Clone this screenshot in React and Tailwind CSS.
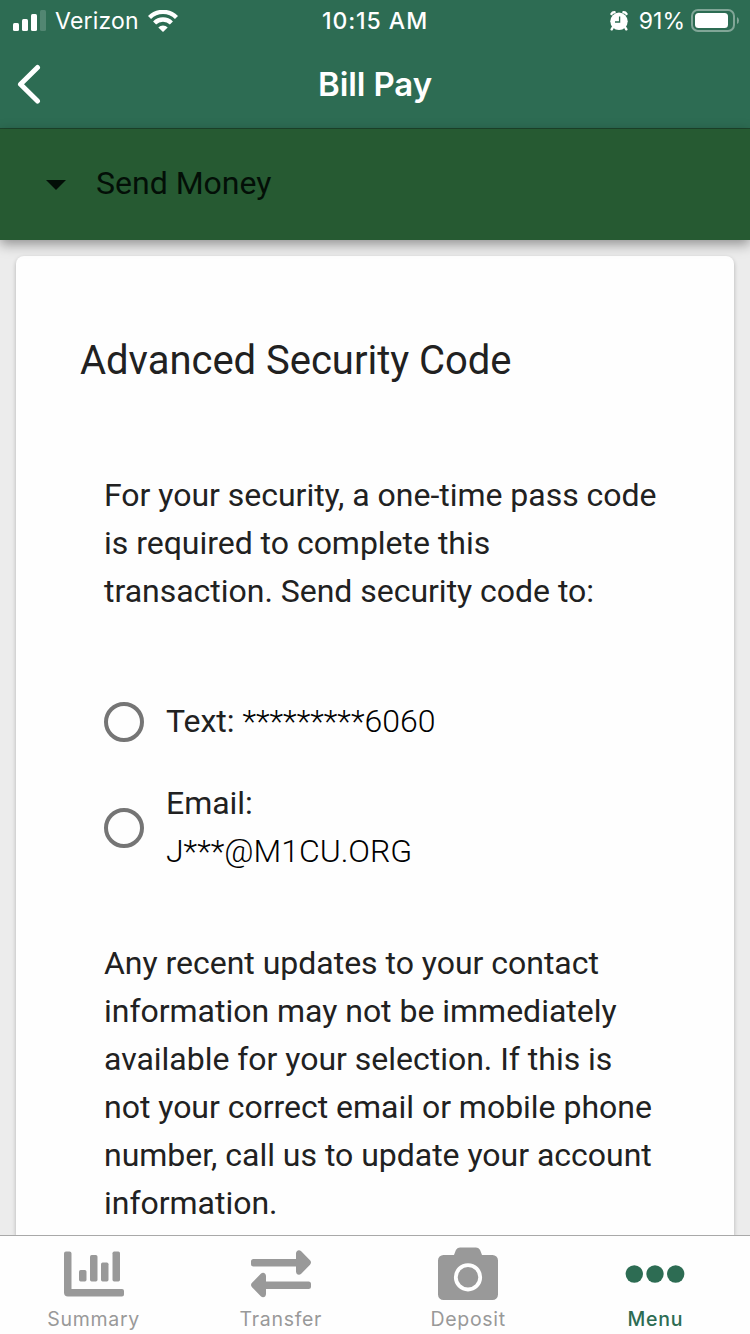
import React from "react";

const tabs = [
  { name: "Summary", icon: SummaryIcon, active: false },
  { name: "Transfer", icon: TransferIcon, active: false },
  { name: "Deposit", icon: DepositIcon, active: false },
  { name: "Menu", icon: MenuIcon, active: true },
];

function SummaryIcon() {
  return (
    <svg width="60" height="60" viewBox="0 0 60 60" fill="currentColor">
      <path d="M2 10.500h3.500a2 2 0 0 1 2 2V48h50.500a2 2 0 0 1 2 2v3.500a2 2 0 0 1-2 2H4a4 4 0 0 1-4-4V12.500a2 2 0 0 1 2-2z" />
      <rect x="15" y="29" width="7.500" height="11.500" rx="1.700" />
      <rect x="26" y="14" width="7.500" height="26.500" rx="1.700" />
      <rect x="37" y="21.500" width="7.500" height="19" rx="1.700" />
      <rect x="48.500" y="10.500" width="7.500" height="30" rx="1.700" />
    </svg>
  );
}

function TransferIcon() {
  return (
    <svg width="60" height="60" viewBox="0 0 60 60" fill="currentColor">
      <path d="M2.500 18H45V12.500C45 9.500 48 8 50.200 10.200L59 19.300Q61 21.500 59 23.700L50.200 32.800C48 35 45 33.500 45 30.500V25.500H2.500Q0 25.500 0 23V20.500Q0 18 2.500 18z" />
      <path d="M57.500 40.500H15V35C15 32 12 30.500 9.800 32.700L1 41.800Q-1 44 1 46.200L9.800 55.300C12 57.500 15 56 15 53V48H57.500Q60 48 60 45.500V43Q60 40.500 57.500 40.500z" />
    </svg>
  );
}

function DepositIcon() {
  return (
    <svg width="60" height="60" viewBox="0 0 60 60" fill="currentColor">
      <path d="M5.500 14H16L17.700 9.500Q19 6.500 22.300 6.500H37.700Q41 6.500 42.300 9.500L44 14H54.500A5.500 5.500 0 0 1 60 19.500V53.500A5.500 5.500 0 0 1 54.500 59H5.500A5.500 5.500 0 0 1 0 53.500V19.500A5.500 5.500 0 0 1 5.500 14z" />
      <circle cx="30" cy="36.300" r="12.200" fill="none" stroke="#fff" strokeWidth="3.800" />
    </svg>
  );
}

function MenuIcon() {
  return (
    <svg width="60" height="60" viewBox="0 0 60 60" fill="currentColor">
      <circle cx="9.300" cy="33" r="8.700" />
      <circle cx="30" cy="33" r="8.700" />
      <circle cx="50.700" cy="33" r="8.700" />
    </svg>
  );
}

const StatusBar = () => (
  <div className="grid h-10 grid-cols-3 items-center font-['Inter',sans-serif] text-[23px] leading-10">
    <div className="flex items-center pl-[13px]">
      <svg width="33" height="22" viewBox="0 0 33 22" fill="#fff">
        <rect x="0" y="13" width="6" height="8" rx="1.500" />
        <rect x="9" y="9" width="6" height="12" rx="1.500" />
        <rect x="18" y="4" width="6" height="17" rx="1.500" />
        <rect x="27" y="0" width="6" height="21" rx="1.500" opacity="0.180" />
      </svg>
      <span className="ml-[9px] pt-px tracking-[0.2px]">Verizon</span>
      <svg className="ml-[9px]" width="30" height="22" viewBox="0 0 30 22" fill="none" stroke="#fff" strokeWidth="4.300">
        <path d="M1.500 7.500A19 19 0 0 1 28.500 7.500" />
        <path d="M6.600 13A11.800 11.800 0 0 1 23.400 13" />
        <path d="M15 22L10.300 17.500A6.600 6.600 0 0 1 19.700 17.500z" fill="#fff" stroke="none" />
      </svg>
    </div>
    <div className="pt-px text-center font-medium tracking-[0.95px]">10:15 AM</div>
    <div className="flex items-center justify-end pr-[11px]">
      <svg width="18" height="20" viewBox="0 0 18 20">
        <g stroke="#fff" strokeWidth="2.500" strokeLinecap="round">
          <path d="M1.500 3Q2.500 1.200 4.500 1.300M16.500 3Q15.500 1.200 13.500 1.300M3 16L1.700 18.300M15 16L16.300 18.300" fill="none" />
        </g>
        <circle cx="9" cy="10.300" r="8.700" fill="#fff" />
        <path d="M9.600 5.500V11H5" fill="none" stroke="#2d6c53" strokeWidth="1.300" />
      </svg>
      <span className="ml-[11px] pt-px">91%</span>
      <svg className="ml-[6px]" width="48" height="23" viewBox="0 0 48 23">
        <rect x="1" y="1" width="42" height="21" rx="6" fill="none" stroke="#fff" strokeOpacity="0.400" strokeWidth="2" />
        <rect x="4" y="4" width="33" height="15" rx="3.500" fill="#fff" />
        <path d="M46 8Q48 9 48 11.500T46 15z" fill="#fff" opacity="0.400" />
      </svg>
    </div>
  </div>
);

const Option = ({ label, value }) => (
  <label className="flex items-center gap-[22px]">
    <span className="mt-0.5 size-10 shrink-0 rounded-full border-4 border-[#757575]" />
    <span>
      {label} {value}
    </span>
  </label>
);

const App = () => {
  return (
    <div className="flex h-[1334px] w-[750px] flex-col overflow-hidden bg-[#ececec] font-['Roboto',sans-serif]">
      <header className="h-[129px] shrink-0 border-b border-[#1d462c] bg-[#2d6c53] text-white">
        <StatusBar />
        <div className="grid h-[88px] grid-cols-3 items-center font-['Inter',sans-serif]">
          <svg className="ml-[17px]" width="24" height="40" viewBox="0 0 24 40" fill="none" stroke="#fff" strokeWidth="5" strokeLinecap="round" strokeLinejoin="round">
            <path d="M20.500 3.500L3.500 20.200L20.500 37" />
          </svg>
          <h1 className="pt-0.5 text-center text-[33px] font-semibold tracking-[-0.1px]">Bill Pay</h1>
        </div>
      </header>

      <div className="z-10 flex h-[111px] shrink-0 items-center bg-[#265a32] pl-[46px] text-[#030f07] shadow-[0_4px_12px_rgba(0,0,0,0.4)]">
        <svg width="20" height="10" viewBox="0 0 20 10" fill="currentColor">
          <path d="M0 0H20L10 10z" />
        </svg>
        <span className="ml-[30px] pb-1 text-[32px]">Send Money</span>
      </div>

      <main className="mx-4 mt-4 min-h-0 flex-1 rounded-t-lg bg-[#fefefe] pt-[81px] text-[32px] leading-[48px] tracking-[-0.02px] text-[#212121] shadow-[0_2px_4px_rgba(0,0,0,0.25)]">
        <h2 className="pl-16 text-[40px]">Advanced Security Code</h2>
        <div className="pr-16 pl-[88px]">
          <p className="mt-[86px]">
            For your security, a one-time pass code
            <br />
            is required to complete this
            <br />
            transaction. Send security code to:
          </p>
          <div className="mt-[82px] flex flex-col gap-[34px]">
            <Option
              label="Text:"
              value={<span className="font-light text-black">*********6060</span>}
            />
            <Option
              label="Email:"
              value={<span className="block font-light text-black">J***@M1CU.ORG</span>}
            />
          </div>
          <p className="mt-16">
            Any recent updates to your contact
            <br />
            information may not be immediately
            <br />
            available for your selection. If this is
            <br />
            not your correct email or mobile phone
            <br />
            number, call us to update your account
            <br />
            information.
          </p>
        </div>
      </main>

      <nav className="z-10 grid h-[99px] shrink-0 grid-cols-4 border-t border-[#a9a9a9] bg-[#fefefe] pr-px font-['Inter',sans-serif]">
        {tabs.map((tab) => (
          <div
            key={tab.name}
            className={`flex flex-col items-center pt-[5px] ${tab.active ? "font-medium text-[#2d6c53]" : "font-normal text-[#999999]"}`}
          >
            <tab.icon />
            <span className="mt-[6px] text-[19.5px] leading-6 tracking-[0.7px]">{tab.name}</span>
          </div>
        ))}
      </nav>
    </div>
  );
};

export default App;
